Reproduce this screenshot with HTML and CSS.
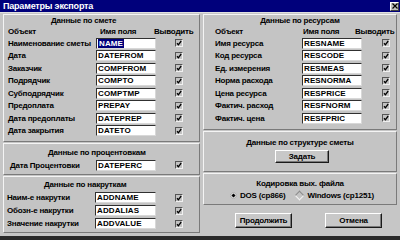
FILE: index.html
```html
<!DOCTYPE html>
<html lang="ru">
<head>
    <meta charset="UTF-8">
    <title>Параметры экспорта</title>
    <link rel="stylesheet" href="styles.css">
</head>
<body>
<div class="window">
    <div class="titlebar">
        <span class="title">Параметры экспорта</span>
        <span class="close-btn">
            <svg width="6" height="6" viewBox="0 0 6 6"><path d="M0.5 0.5L5.5 5.5M5.5 0.5L0.5 5.5" stroke="#000" stroke-width="1.2"/></svg>
        </span>
    </div>

    <div class="dialog">
        <div class="column">
            <!-- Данные по смете -->
            <section class="panel panel-estimate">
                <div class="panel-head head-estimate">Данные по смете</div>
                <div class="col-heads left-heads">
                    <span>Объект</span><span>Имя поля</span><span>Выводить</span>
                </div>
                <div class="row left-row"><span>Наименование сметы</span><span class="field"><span class="sel">NAME</span></span><span class="check"></span></div>
                <div class="row left-row"><span>Дата</span><span class="field">DATEFROM</span><span class="check"></span></div>
                <div class="row left-row"><span>Заказчик</span><span class="field">COMPFROM</span><span class="check"></span></div>
                <div class="row left-row"><span>Подрядчик</span><span class="field">COMPTO</span><span class="check"></span></div>
                <div class="row left-row"><span>Субподрядчик</span><span class="field">COMPTMP</span><span class="check"></span></div>
                <div class="row left-row"><span>Предоплата</span><span class="field">PREPAY</span><span class="check"></span></div>
                <div class="row left-row"><span>Дата предоплаты</span><span class="field">DATEPREP</span><span class="check"></span></div>
                <div class="row left-row"><span>Дата закрытия</span><span class="field">DATETO</span><span class="check"></span></div>
            </section>

            <!-- Данные по процентовкам -->
            <section class="panel panel-perc">
                <div class="panel-head head-perc">Данные по процентовкам</div>
                <div class="row left-row perc-row"><span>Дата Процентовки</span><span class="field">DATEPERC</span><span class="check"></span></div>
            </section>

            <!-- Данные по накруткам -->
            <section class="panel panel-add">
                <div class="panel-head head-add">Данные по накруткам</div>
                <div class="row left-row add-row"><span>Наим-е накрутки</span><span class="field">ADDNAME</span><span class="check"></span></div>
                <div class="row left-row add-row"><span>Обозн-е накрутки</span><span class="field">ADDALIAS</span><span class="check"></span></div>
                <div class="row left-row add-row"><span>Значение накрутки</span><span class="field">ADDVALUE</span><span class="check"></span></div>
            </section>
        </div>

        <div class="column">
            <!-- Данные по ресурсам -->
            <section class="panel panel-res">
                <div class="panel-head">Данные по ресурсам</div>
                <div class="col-heads right-heads">
                    <span>Объект</span><span>Имя поля</span><span>Выводить</span>
                </div>
                <div class="row right-row"><span>Имя ресурса</span><span class="field">RESNAME</span><span class="check"></span></div>
                <div class="row right-row"><span>Код ресурса</span><span class="field">RESCODE</span><span class="check"></span></div>
                <div class="row right-row"><span>Ед. измерения</span><span class="field">RESMEAS</span><span class="check"></span></div>
                <div class="row right-row"><span>Норма расхода</span><span class="field">RESNORMA</span><span class="check"></span></div>
                <div class="row right-row"><span>Цена ресурса</span><span class="field">RESPRICE</span><span class="check"></span></div>
                <div class="row right-row"><span>Фактич. расход</span><span class="field">RESFNORM</span><span class="check"></span></div>
                <div class="row right-row"><span>Фактич. цена</span><span class="field">RESFPRIC</span><span class="check"></span></div>
            </section>

            <!-- Данные по структуре сметы -->
            <section class="panel panel-struct">
                <div class="panel-head head-struct">Данные по структуре сметы</div>
                <div class="center-line"><span class="button btn-set">Задать</span></div>
            </section>

            <!-- Кодировка -->
            <section class="panel panel-enc">
                <div class="panel-head head-enc">Кодировка вых. файла</div>
                <div class="radio-line">
                    <span class="radio on"></span><span class="radio-text">DOS (cp866)</span>
                    <span class="radio off"></span><span class="radio-text">Windows (cp1251)</span>
                </div>
            </section>

            <div class="actions">
                <span class="button btn-main">Продолжить</span>
                <span class="button btn-main">Отмена</span>
            </div>
        </div>
    </div>
</div>
</body>
</html>
```

FILE: styles.css
```css
body {
    margin: 0;
    padding: 0;
    background-color: #c0c0c0;
    font-family: 'Liberation Sans', Arial, sans-serif;
    font-size: 8px;
    font-weight: bold;
    letter-spacing: -0.2px;
    color: #000;
}

.window {
    width: 400px;
    height: 240px;
    box-sizing: border-box;
    background-color: #c6c6c6;
    background-image: radial-gradient(#dedede 0.6px, transparent 0.7px);
    background-size: 2px 2px;
    border-bottom: 4px solid #2a2a2a;
    overflow: hidden;
}

.titlebar {
    height: 12px;
    background-color: #00007b;
    border-bottom: 1px solid #e0e0e0;
    display: flex;
    align-items: center;
    justify-content: space-between;
    padding: 0 1px 0 3px;
}

.title {
    color: #fff;
    font-size: 9px;
    line-height: 12px;
}

.close-btn {
    width: 7px;
    height: 7px;
    background-color: #c0c0c0;
    border: 1px solid;
    border-color: #fff #404040 #404040 #fff;
    display: flex;
    align-items: center;
    justify-content: center;
}

.dialog {
    display: grid;
    grid-template-columns: 197px 194px;
    gap: 3px;
    padding: 1px 3px 0 3px;
}

.column {
    display: flex;
    flex-direction: column;
    gap: 1px;
}

.panel {
    background-color: #c4c4c4;
    border: 1px solid;
    border-color: #f4f4f4 #7a7a7a #7a7a7a #f4f4f4;
    box-sizing: border-box;
}

.panel-head {
    text-align: center;
    height: 11px;
    line-height: 11px;
}

.head-estimate {
    text-align: left;
    padding-left: 47px;
}

.head-perc {
    text-align: left;
    padding-left: 44px;
    padding-top: 3px;
    height: 12px;
    line-height: 12px;
}

.head-add {
    text-align: left;
    padding-left: 40px;
    padding-top: 2px;
    height: 12px;
    line-height: 12px;
}

.head-struct {
    padding-top: 5px;
    height: 12px;
    line-height: 12px;
}

.head-enc {
    padding-top: 4px;
    height: 12px;
    line-height: 12px;
}

.panel-estimate { height: 128px; }
.panel-perc { height: 32px; }
.panel-add { height: 57px; }
.panel-res { height: 116px; }
.panel-struct { height: 41px; }
.panel-enc { height: 32px; }

.col-heads {
    display: grid;
    height: 11px;
    line-height: 11px;
}

.left-heads {
    grid-template-columns: 92px 54px auto;
    padding-left: 4px;
}

.right-heads {
    grid-template-columns: 88px 52px auto;
    padding-left: 11px;
}

.row {
    display: grid;
    align-items: center;
    height: 12.5px;
}

.left-row {
    grid-template-columns: 88px 60px auto;
    padding-left: 4px;
}

.perc-row {
    padding-left: 6px;
    grid-template-columns: 86px 60px auto;
}

.add-row {
    height: 13px;
    padding-left: 3px;
    grid-template-columns: 88px 61px auto;
}

.right-row {
    grid-template-columns: 87px 60px auto;
    padding-left: 11px;
}

.field {
    height: 11px;
    box-sizing: border-box;
    background-color: #fff;
    border: 1px solid;
    border-color: #303030 #d8d8d8 #d8d8d8 #303030;
    padding-left: 1px;
    line-height: 9px;
    font-size: 8px;
    letter-spacing: 0.1px;
}

.sel {
    background-color: #00007b;
    color: #fff;
    padding: 0 1px;
}

.check {
    width: 8px;
    height: 8px;
    box-sizing: border-box;
    margin-left: 19px;
    background-color: #c2c2c2;
    border: 1px solid;
    border-color: #555 #f0f0f0 #f0f0f0 #555;
    background-image: url("data:image/svg+xml,%3Csvg xmlns='http://www.w3.org/2000/svg' width='6' height='6'%3E%3Cpath d='M1 3.2L2.4 4.8L5.2 1' fill='none' stroke='%23000' stroke-width='1.3'/%3E%3C/svg%3E");
    background-repeat: no-repeat;
}

.right-row .check {
    margin-left: 20px;
}

.center-line {
    display: flex;
    justify-content: center;
    padding-left: 4px;
    margin-top: 1px;
}

.button {
    display: flex;
    align-items: center;
    justify-content: center;
    box-sizing: border-box;
    background-color: #c8c8c8;
    border: 1px solid;
    border-color: #fff #1a1a1a #1a1a1a #fff;
    box-shadow: inset -1px -1px 0 #7a7a7a;
}

.btn-set {
    width: 54px;
    height: 13px;
}

.radio-line {
    display: flex;
    align-items: center;
    height: 10px;
    padding-left: 27px;
}

.radio {
    width: 5px;
    height: 5px;
    transform: rotate(45deg);
    margin-right: 4px;
}

.radio.on {
    background-color: #000;
    border: 1px solid #e8e8e8;
    width: 3px;
    height: 3px;
}

.radio.off {
    border: 1px solid;
    border-color: #8a8a8a #f4f4f4 #f4f4f4 #8a8a8a;
    margin-left: 11px;
    margin-right: 4px;
}

.radio-text {
    font-weight: bold;
}

.actions {
    display: flex;
    gap: 33px;
    padding-left: 32px;
    padding-top: 7px;
}

.btn-main {
    width: 57px;
    height: 15px;
}
```
